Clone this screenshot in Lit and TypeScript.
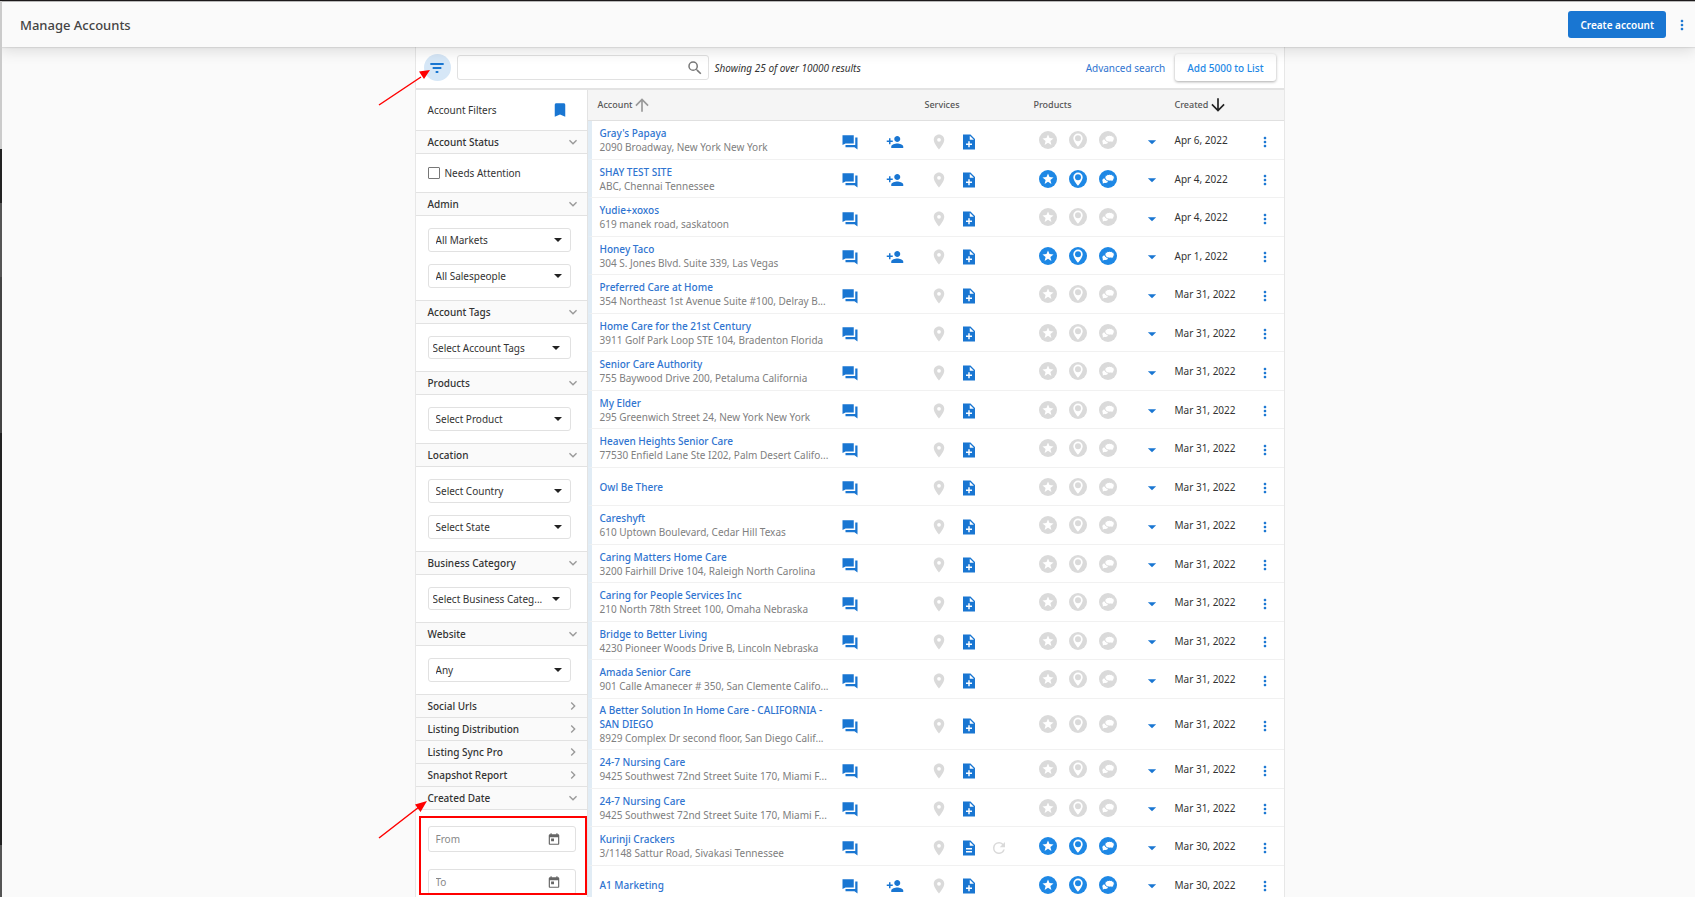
import { LitElement, html, css, svg, nothing } from "lit";
import { customElement } from "lit/decorators.js";

const glyphs: Record<string, string> = {
  chat: "M2 3h15v11H6l-4 2zM19 6h3v16l-4-3H6v-3h13z",
  person: "M15 12c2.21 0 4-1.79 4-4s-1.79-4-4-4-4 1.79-4 4 1.79 4 4 4zm-9-2V7H4v3H1v2h3v3h2v-3h3v-2H6zm9 4c-2.67 0-8 1.34-8 4v2h16v-2c0-2.66-5.33-4-8-4z",
  pin: "M12 2C8.13 2 5 5.13 5 9c0 5.25 7 13 7 13s7-7.75 7-13c0-3.87-3.13-7-7-7zm0 9.5a2.5 2.5 0 0 1 0-5 2.5 2.5 0 0 1 0 5z",
  docAdd: "M14 2H4v20h16V8l-6-6zm2 14h-3v3h-2v-3H8v-2h3v-3h2v3h3v2zm-3-7V3.500L18.500 9H13z",
  doc: "M14 2H4v20h16V8l-6-6zm2 16H8v-2h8v2zm0-4H8v-2h8v2zm-3-5V3.500L18.500 9H13z",
  refresh: "M17.65 6.35A7.96 7.96 0 0 0 12 4a8 8 0 1 0 7.730 10h-2.080A6 6 0 1 1 12 6c1.660 0 3.140.69 4.220 1.780L13 11h7V4l-2.350 2.350z",
  more: "M12 8c1.100 0 2-.9 2-2s-.9-2-2-2-2 .9-2 2 .9 2 2 2zm0 2c-1.100 0-2 .9-2 2s.9 2 2 2 2-.9 2-2-.9-2-2-2zm0 6c-1.100 0-2 .9-2 2s.9 2 2 2 2-.9 2-2-.9-2-2-2z",
  caret: "M6.500 9.500h11l-5.500 5.500z",
  up: "M4 12l1.410 1.410L11 7.830V20h2V7.830l5.580 5.590L20 12l-8-8z",
  down: "M20 12l-1.410-1.410L13 16.170V4h-2v12.170l-5.580-5.590L4 12l8 8z",
  search: "M15.500 14h-.79l-.28-.27A6.470 6.470 0 0 0 16 9.500 6.500 6.500 0 1 0 9.500 16c1.610 0 3.090-.59 4.230-1.570l.27.28v.79l5 4.990L20.490 19l-4.990-5zm-6 0a4.500 4.500 0 1 1 0-9 4.500 4.500 0 0 1 0 9z",
  filter: "M2 4.500h20v3H2zM5.500 10.500h13v3h-13zM10 16.500h4v3h-4z",
  bookmark: "M17 3H7c-1.100 0-2 .9-2 2v16l7-3 7 3V5c0-1.100-.9-2-2-2z",
  chevDown: "M7.410 8.590L12 13.170l4.590-4.580L18 10l-6 6-6-6z",
  chevRight: "M8.590 16.590L13.170 12 8.590 7.410 10 6l6 6-6 6z",
  calendar: "M19 4h-1V2h-2v2H8V2H6v2H5a2 2 0 0 0-2 2v14c0 1.100.9 2 2 2h14c1.100 0 2-.9 2-2V6c0-1.100-.9-2-2-2zm0 16H5V9h14v11zM7 11h5v5H7z",
};

const icon = (name: string, cls = "") =>
  html`<svg class="icon ${cls}" viewBox="0 0 24 24" aria-hidden="true"><path d=${glyphs[name]} /></svg>`;

const badge = (shape: unknown, on: boolean) =>
  html`<svg class="badge ${on ? "on" : ""}" viewBox="0 0 18 18" aria-hidden="true"><circle cx="9" cy="9" r="9" />${shape}</svg>`;

const star = svg`<path class="cut" d="M9 3.400l1.500 3.700 4 .3-3.100 2.600 1 3.900L9 11.800l-3.400 2.100 1-3.900-3.100-2.600 4-.3z"/>`;
const place = svg`<path class="cut" d="M9 2.500a4.700 4.700 0 0 0-4.700 4.700C4.300 10.500 9 15.800 9 15.800s4.700-5.300 4.700-8.600A4.700 4.700 0 0 0 9 2.500z"/><circle cx="9" cy="7.200" r="3"/>`;
const cloud = svg`<ellipse class="cut" cx="6.300" cy="10.600" rx="2.900" ry="2.400"/><path class="cut" d="M4 11.500l-.4 2 2.600-.7z"/><path class="edge" d="M10.600 4.300c2.700 0 4.700 1.500 4.700 3.400 0 1.100-.5 2-1.300 2.600l.3 1.500-2.200-.8c-.5.1-1 .1-1.500.1-2.700 0-4.700-1.500-4.700-3.400s2-3.400 4.700-3.400z"/>`;

interface Account {
  name: string;
  address?: string;
  date: string;
  active?: boolean;
  assign?: boolean;
  report?: boolean;
}

const accounts: Account[] = [
  { name: "Gray's Papaya", address: "2090 Broadway, New York New York", date: "Apr 6, 2022", assign: true },
  { name: "SHAY TEST SITE", address: "ABC, Chennai Tennessee", date: "Apr 4, 2022", assign: true, active: true },
  { name: "Yudie+xoxos", address: "619 manek road, saskatoon", date: "Apr 4, 2022" },
  { name: "Honey Taco", address: "304 S. Jones Blvd. Suite 339, Las Vegas", date: "Apr 1, 2022", assign: true, active: true },
  { name: "Preferred Care at Home", address: "354 Northeast 1st Avenue Suite #100, Delray B...", date: "Mar 31, 2022" },
  { name: "Home Care for the 21st Century", address: "3911 Golf Park Loop STE 104, Bradenton Florida", date: "Mar 31, 2022" },
  { name: "Senior Care Authority", address: "755 Baywood Drive 200, Petaluma California", date: "Mar 31, 2022" },
  { name: "My Elder", address: "295 Greenwich Street 24, New York New York", date: "Mar 31, 2022" },
  { name: "Heaven Heights Senior Care", address: "77530 Enfield Lane Ste I202, Palm Desert Califo...", date: "Mar 31, 2022" },
  { name: "Owl Be There", date: "Mar 31, 2022" },
  { name: "Careshyft", address: "610 Uptown Boulevard, Cedar Hill Texas", date: "Mar 31, 2022" },
  { name: "Caring Matters Home Care", address: "3200 Fairhill Drive 104, Raleigh North Carolina", date: "Mar 31, 2022" },
  { name: "Caring for People Services Inc", address: "210 North 78th Street 100, Omaha Nebraska", date: "Mar 31, 2022" },
  { name: "Bridge to Better Living", address: "4230 Pioneer Woods Drive B, Lincoln Nebraska", date: "Mar 31, 2022" },
  { name: "Amada Senior Care", address: "901 Calle Amanecer # 350, San Clemente Califo...", date: "Mar 31, 2022" },
  { name: "A Better Solution In Home Care - CALIFORNIA - SAN DIEGO", address: "8929 Complex Dr second floor, San Diego Calif...", date: "Mar 31, 2022" },
  { name: "24-7 Nursing Care", address: "9425 Southwest 72nd Street Suite 170, Miami F...", date: "Mar 31, 2022" },
  { name: "24-7 Nursing Care", address: "9425 Southwest 72nd Street Suite 170, Miami F...", date: "Mar 31, 2022" },
  { name: "Kurinji Crackers", address: "3/1148 Sattur Road, Sivakasi Tennessee", date: "Mar 30, 2022", active: true, report: true },
  { name: "A1 Marketing", date: "Mar 30, 2022", assign: true, active: true },
];

@customElement("app-root")
export class AppRoot extends LitElement {
  static styles = css`
    :host { display: block; height: 100vh; overflow: hidden; background: #fafafa; color: #333;
      font: 10px/14px "Noto Sans", "Open Sans", sans-serif; }
    * { box-sizing: border-box; }
    button, input, select { font: inherit; color: inherit; margin: 0; }
    button { border: 0; background: none; padding: 0; cursor: pointer; display: flex; align-items: center; justify-content: center; }
    a { color: #2f74d0; text-decoration: none; }
    .icon { width: 18px; height: 18px; fill: #1976d2; display: block; flex: none; }
    .page { display: flex; flex-direction: column; height: 100%; border-top: 1px solid #1d1a1b; position: relative; }
    .edge-bar { position: absolute; left: 0; top: 0; bottom: 0; width: 2px; z-index: 4;
      background: linear-gradient(#cbcbcb 148px, #222 148px 202px, #555 202px 276px, #444 276px 432px, #222 432px 844px, #555 844px); }
    .top { display: flex; align-items: center; height: 46px; flex: none; padding: 0 5px 0 20px; background: #fafafa;
      border-top: 1px solid #b8b8b8; box-shadow: 0 1px 1px #00000014, 0 4px 14px #0000001f; position: relative; z-index: 2; }
    h1 { font-size: 13px; line-height: 18px; font-weight: 500; margin: 0; flex: 1; color: #444; }
    .create { height: 27px; padding: 0 12px; background: #1976d2; color: #fff; border-radius: 3px; font-weight: 600; }
    .top .more { margin-left: 8px; }
    .more .icon { width: 16px; height: 18px; }
    main { flex: 1; min-height: 0; padding-left: 4px; }
    .panel { position: relative; width: 100%; max-width: 870px; height: 100%; margin: 0 auto; background: #fff; display: flex; flex-direction: column;
      border: solid #e7e7e7; border-width: 0 1px; }
    .toolbar { display: flex; align-items: center; height: 43px; flex: none; border-bottom: 2px solid #e3e3e3; padding: 0 8px; }
    .filter { width: 27px; height: 27px; border-radius: 50%; background: #d6e7f7; }
    .filter .icon { width: 16px; height: 16px; }
    .search { display: flex; align-items: center; width: 252px; height: 25px; border: 1px solid #e1e1e1; border-radius: 3px; margin: 0 6px; padding-right: 4px; }
    .search input { flex: 1; min-width: 0; height: 100%; border: 0; background: none; padding: 0 8px; outline: 0; }
    .search .icon { fill: #777; width: 18px; height: 18px; }
    .count { font-style: italic; flex: 1; }
    .add { height: 27px; margin-left: 10px; padding: 0 12px; border-radius: 3px; background: #fff; color: #1e88e5; font-weight: 500; box-shadow: 0 1px 3px #00000055; }
    .body { flex: 1; min-height: 0; display: flex; overflow: hidden; }
    aside { width: 172px; flex: none; border-right: 1px solid #e3e3e3; }
    .head { display: flex; align-items: center; justify-content: space-between; height: 40px; padding: 0 18px 0 12px; }
    h2 { font-size: 10px; line-height: 14px; font-weight: 400; margin: 0; }
    .section { width: 100%; height: 23px; justify-content: space-between; padding: 0 6px 0 12px; border-top: 1px solid #e2e2e2; background: #fafafa; font-weight: 500; color: #333; }
    .section .icon { width: 16px; height: 16px; fill: #999; }
    .fields { display: flex; flex-direction: column; gap: 12px; padding: 12px 16px 12px 12px; border-top: 1px solid #e2e2e2; }
    .select { display: grid; align-items: center; height: 24px; border: 1px solid #e1e1e1; border-radius: 3px; }
    .select > * { grid-area: 1 / 1; }
    .select select { appearance: none; border: 0; background: none; width: 100%; height: 100%; padding: 0 20px 0 7px; outline: 0; text-overflow: ellipsis; }
    .select::after { content: ""; grid-area: 1 / 1; justify-self: end; margin-right: 8px; border: solid transparent; border-width: 4px 4px 0; border-top-color: #222; pointer-events: none; }
    .select.multi { height: 23px; }
    .select.multi select { padding-left: 4px; }
    .select.multi::after { margin-right: 10px; }
    .check { display: flex; align-items: center; gap: 5px; height: 14px; }
    .check input { appearance: none; width: 12px; height: 12px; border: 1px solid #777; border-radius: 1px; background: #fff; }
    .dates { gap: 17px; padding: 16px 11px 16px 12px; }
    .date { display: flex; align-items: center; height: 26px; border: 1px solid #e1e1e1; border-radius: 3px; padding: 0 14px 0 7px; }
    .date input { flex: 1; min-width: 0; border: 0; outline: 0; background: none; padding: 0; }
    .date input::placeholder { color: #888; opacity: 1; }
    .date .icon { width: 14px; height: 14px; fill: #666; }
    .list { flex: 1; min-width: 0; }
    table { width: 100%; table-layout: fixed; border-collapse: separate; border-spacing: 0; }
    th { height: 31px; padding: 0; background: #f5f5f5; border-bottom: 1px solid #e0e0e0; text-align: left; font-weight: 500; font-size: 9px; color: #555; }
    th:first-child { padding-left: 10px; }
    .sort { display: flex; align-items: center; }
    .sort .icon { width: 20px; height: 20px; fill: #999; }
    .sort .sorted { fill: #222; }
    td { padding: 0; height: 39px; border-bottom: 1px solid #f1f1f1; vertical-align: middle; }
    tr:nth-child(even) td { height: 38px; }
    .tool { padding-top: 3px; }
    .account { border-left: 4px solid #e1ecf5; padding: 4px 10px 4px 8px; }
    tr:nth-child(even) .account { padding-bottom: 3px; }
    .name { display: block; font-weight: 500; }
    .address { line-height: 15px; color: #808080; white-space: nowrap; }
    .group { display: flex; align-items: center; gap: 12px; padding-left: 5px; }
    .pale { fill: #dadada; }
    .badge { width: 18px; height: 18px; fill: #dadada; display: block; }
    .badge.on { fill: #1e88e5; }
    .badge .cut { fill: #fff; }
    .badge .edge { fill: #fff; stroke: #dadada; }
    .badge.on .edge { stroke: #1e88e5; }
    .notes { position: absolute; left: -38px; top: 0; width: 212px; height: 850px; z-index: 3; pointer-events: none; fill: none; stroke: #f00; overflow: visible; }
    .notes .tip { fill: #f00; stroke: none; }
    .w-account { width: 253px; }
    .w-chat { width: 45px; }
    .w-assign { width: 39px; }
    .w-services { width: 109px; }
    .w-products { width: 109px; }
    .w-caret { width: 32px; }
    .w-more { width: 27px; }
  `;

  private section(label: string, content: unknown = nothing) {
    const open = content !== nothing;
    return html`<button class="section" aria-expanded=${open ? "true" : "false"}>${label}${icon(open ? "chevDown" : "chevRight")}</button>${content}`;
  }

  private selects(labels: string[], multi = false) {
    return html`<div class="fields">${labels.map(
      (l) => html`<label class="select ${multi ? "multi" : ""}"><select aria-label=${l}><option>${l}</option></select></label>`
    )}</div>`;
  }

  private row(a: Account) {
    const on = !!a.active;
    return html`<tr>
      <td class="account"><a class="name" href="#">${a.name}</a>${a.address ? html`<div class="address">${a.address}</div>` : nothing}</td>
      <td class="tool"><button aria-label="Messages">${icon("chat")}</button></td>
      <td class="tool">${a.assign ? html`<button aria-label="Assign">${icon("person")}</button>` : nothing}</td>
      <td class="tool"><div class="group">${icon("pin", "pale")}${icon(a.report ? "doc" : "docAdd")}${a.report ? icon("refresh", "pale") : nothing}</div></td>
      <td><div class="group">${badge(star, on)}${badge(place, on)}${badge(cloud, on)}</div></td>
      <td class="tool"><button aria-label="Show products">${icon("caret")}</button></td>
      <td>${a.date}</td>
      <td class="tool"><button class="more" aria-label="Account actions">${icon("more")}</button></td>
    </tr>`;
  }

  render() {
    return html`<div class="page">
      <div class="edge-bar"></div>
      <header class="top">
        <h1>Manage Accounts</h1>
        <button class="create">Create account</button>
        <button class="more" aria-label="More">${icon("more")}</button>
      </header>
      <main>
        <div class="panel">
          <div class="toolbar">
            <button class="filter" aria-label="Filters">${icon("filter")}</button>
            <label class="search"><input type="text" aria-label="Search accounts" />${icon("search")}</label>
            <span class="count">Showing 25 of over 10000 results</span>
            <a href="#">Advanced search</a>
            <button class="add">Add 5000 to List</button>
          </div>
          <div class="body">
            <aside>
              <div class="head"><h2>Account Filters</h2><button aria-label="Saved filters">${icon("bookmark")}</button></div>
              ${this.section("Account Status", html`<div class="fields"><label class="check"><input type="checkbox" />Needs Attention</label></div>`)}
              ${this.section("Admin", this.selects(["All Markets", "All Salespeople"]))}
              ${this.section("Account Tags", this.selects(["Select Account Tags"], true))}
              ${this.section("Products", this.selects(["Select Product"]))}
              ${this.section("Location", this.selects(["Select Country", "Select State"]))}
              ${this.section("Business Category", this.selects(["Select Business Categ..."], true))}
              ${this.section("Website", this.selects(["Any"]))}
              ${["Social Urls", "Listing Distribution", "Listing Sync Pro", "Snapshot Report"].map((l) => this.section(l))}
              ${this.section("Created Date", html`<div class="fields dates">${["From", "To"].map(
                (l) => html`<label class="date"><input type="text" placeholder=${l} aria-label=${l} />${icon("calendar")}</label>`
              )}</div>`)}
            </aside>
            <div class="list">
              <table>
                <colgroup><col class="w-account" /><col class="w-chat" /><col class="w-assign" /><col class="w-services" /><col class="w-products" /><col class="w-caret" /><col /><col class="w-more" /></colgroup>
                <thead><tr>
                  <th><span class="sort">Account${icon("up")}</span></th><th></th><th></th><th>Services</th><th>Products</th><th></th><th><span class="sort">Created${icon("down", "sorted")}</span></th><th></th>
                </tr></thead>
                <tbody>${accounts.map((a) => this.row(a))}</tbody>
              </table>
            </div>
          </div>
          <svg class="notes" viewBox="0 0 212 850" aria-hidden="true">
            <path stroke-width="1.500" d="M1 58L43 30M1 791L41 760" />
            <path class="tip" d="M52 23L41 24.500 46 32zM49 754L37 757.500 42.500 765z" />
            <rect stroke-width="2" x="42" y="770" width="166" height="77" />
          </svg>
        </div>
      </main>
    </div>`;
  }
}
